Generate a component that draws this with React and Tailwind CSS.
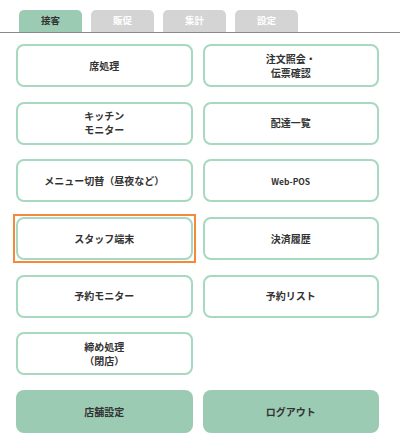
import { useState } from 'react';

const tabs = ['接客', '販促', '集計', '設定'];

const menus = [
  ['席処理'],
  ['注文照会・', '伝票確認'],
  ['キッチン', 'モニター'],
  ['配達一覧'],
  ['メニュー切替（昼夜など）'],
  ['Web-POS'],
  ['スタッフ端末'],
  ['決済履歴'],
  ['予約モニター'],
  ['予約リスト'],
  ['締め処理', '（閉店）'],
];

export default function App() {
  const [tab, setTab] = useState(0);

  return (
    <div className="w-[400px] h-[443px] bg-white text-[#333] font-['Noto_Sans_CJK_JP',sans-serif] overflow-hidden">
      {/* tabs */}
      <div className="flex gap-[9px] pl-[19px] pt-[10px] border-b border-[#8a8a8a]">
        {tabs.map((t, i) => (
          <button
            key={t}
            onClick={() => setTab(i)}
            className={
              'w-[63px] h-[22px] rounded-t-[5px] text-[9.5px] font-bold leading-none ' +
              (i === tab ? 'bg-[#9ccbb4] text-[#333]' : 'bg-[#d4d4d4] text-white')
            }
          >
            {t}
          </button>
        ))}
      </div>

      {/* menu grid */}
      <div className="grid grid-cols-2 gap-x-[10px] gap-y-[14.7px] px-[16px] pt-[11px] pr-[21px]">
        {menus.map((m, i) => (
          <button
            key={i}
            className={
              'relative h-[43px] rounded-[8px] border-2 border-[#a7d8c0] bg-white flex flex-col items-center justify-center font-bold leading-[14px] ' +
              (m[0] === 'Web-POS' ? 'text-[8.5px]' : 'text-[10px]')
            }
          >
            {m.map((line) => (
              <span key={line}>{line}</span>
            ))}
            {m[0] === 'スタッフ端末' && (
              <span className="absolute -inset-[5px] border-2 border-[#f5883a]" />
            )}
          </button>
        ))}
        <div />
        <button className="h-[43px] rounded-[8px] bg-[#9ccbb4] text-[10px] font-bold">店舗設定</button>
        <button className="h-[43px] rounded-[8px] bg-[#9ccbb4] text-[10px] font-bold">ログアウト</button>
      </div>
    </div>
  );
}
